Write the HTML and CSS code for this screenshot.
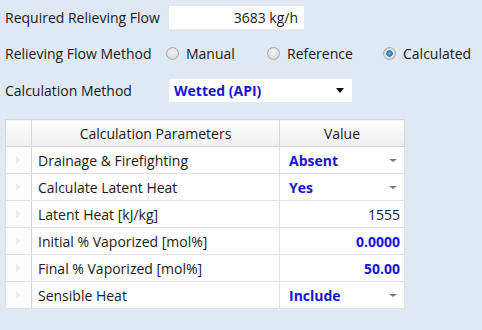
FILE: index.html
```html
<!DOCTYPE html>
<html lang="en">
<head>
    <meta charset="UTF-8">
    <meta name="viewport" content="width=device-width, initial-scale=1.0">
    <title>Relief Load</title>
    <link rel="stylesheet" href="styles.css">
</head>
<body>
    <div class="panel">
        <div class="row row-flow">
            <span class="label">Required Relieving Flow</span>
            <div class="textbox">3683 kg/h</div>
        </div>

        <div class="row row-method">
            <span class="label">Relieving Flow Method</span>
            <div class="radios">
                <span class="radio radio-manual"><span class="dot"></span>Manual</span>
                <span class="radio radio-ref"><span class="dot"></span>Reference</span>
                <span class="radio"><span class="dot checked"></span>Calculated</span>
            </div>
        </div>

        <div class="row row-calc">
            <span class="label">Calculation Method</span>
            <div class="combo">
                <span class="combo-text">Wetted (API)</span>
                <span class="combo-arrow"></span>
            </div>
        </div>

        <table class="grid">
            <colgroup>
                <col class="c-head">
                <col class="c-name">
                <col class="c-value">
            </colgroup>
            <thead>
                <tr>
                    <th></th>
                    <th>Calculation Parameters</th>
                    <th>Value</th>
                </tr>
            </thead>
            <tbody>
                <tr>
                    <td class="rh"><span class="tri"></span></td>
                    <td>Drainage &amp; Firefighting</td>
                    <td class="pick">Absent<span class="drop"></span></td>
                </tr>
                <tr>
                    <td class="rh"><span class="tri"></span></td>
                    <td>Calculate Latent Heat</td>
                    <td class="pick">Yes<span class="drop"></span></td>
                </tr>
                <tr>
                    <td class="rh"><span class="tri"></span></td>
                    <td>Latent Heat [kJ/kg]</td>
                    <td class="num">1555</td>
                </tr>
                <tr>
                    <td class="rh"><span class="tri"></span></td>
                    <td>Initial % Vaporized [mol%]</td>
                    <td class="num blue">0.0000</td>
                </tr>
                <tr>
                    <td class="rh"><span class="tri"></span></td>
                    <td>Final % Vaporized [mol%]</td>
                    <td class="num blue">50.00</td>
                </tr>
                <tr>
                    <td class="rh"><span class="tri"></span></td>
                    <td>Sensible Heat</td>
                    <td class="pick">Include<span class="drop"></span></td>
                </tr>
            </tbody>
        </table>
    </div>
</body>
</html>
```

FILE: styles.css
```css
body {
    margin: 0;
    background-color: #dfe8f5;
    font-family: "Open Sans", "Noto Sans", sans-serif;
    font-size: 14px;
    color: #1a1a1a;
}
.panel {
    padding: 5px 0 0 5px;
}
.row {
    display: flex;
    align-items: center;
    height: 25px;
}
.row-flow {
    margin-bottom: 11px;
}
.row-method {
    margin-bottom: 12px;
}
.row-calc {
    margin-bottom: 16px;
}
.label {
    width: 163px;
    flex: none;
}
.textbox {
    box-sizing: border-box;
    width: 137px;
    height: 25px;
    line-height: 23px;
    padding-right: 6px;
    text-align: right;
    background: white;
    border: 1px solid #e3e9f1;
}
.radios {
    display: flex;
    align-items: center;
    margin-left: -2px;
}
.radio {
    display: flex;
    align-items: center;
}
.radio-manual {
    width: 101px;
}
.radio-ref {
    width: 116px;
}
.dot {
    box-sizing: border-box;
    width: 13px;
    height: 13px;
    margin-right: 7px;
    border-radius: 50%;
    border: 1px solid #a8a8a8;
    background: radial-gradient(circle at 50% 40%, #f4f4f4 0%, #dcdcdc 70%, #cfcfcf 100%);
}
.dot.checked {
    background: radial-gradient(circle, #5fc3ee 0%, #1e7fc0 32%, #1e7fc0 38%, #e2e2e2 46%, #cfcfcf 100%);
}
.combo {
    box-sizing: border-box;
    width: 185px;
    height: 25px;
    display: flex;
    align-items: center;
    justify-content: space-between;
    padding: 0 8px 0 5px;
    background: white;
    border: 1px solid #e3e9f1;
}
.combo-text {
    color: #1515d6;
    font-weight: bold;
}
.combo-arrow {
    width: 0;
    height: 0;
    border-left: 4px solid transparent;
    border-right: 4px solid transparent;
    border-top: 5px solid #111;
}
.grid {
    border-collapse: collapse;
    width: 399px;
    table-layout: fixed;
    background: white;
    border: 1px solid #d4d4d4;
}
.c-head {
    width: 26px;
}
.c-name {
    width: 248px;
}
.c-value {
    width: 125px;
}
.grid th,
.grid td {
    height: 26px;
    padding: 0;
    border: 1px solid #e2e2e2;
    white-space: nowrap;
}
.grid th {
    font-weight: normal;
    background: linear-gradient(#fdfdfd, #f0f0f0);
    border-color: #d6d6d6;
}
.grid td {
    padding-left: 6px;
}
.grid td.rh {
    padding: 0 0 0 10px;
    background: #fdfdfd;
    border-right-color: #d6d6d6;
}
.tri {
    display: block;
    width: 0;
    height: 0;
    border-top: 4px solid transparent;
    border-bottom: 4px solid transparent;
    border-left: 5px solid #ececec;
}
.grid td.pick {
    padding: 0 7px 0 9px;
    color: #1515d6;
    font-weight: bold;
}
.drop {
    float: right;
    margin-top: 8px;
    width: 0;
    height: 0;
    border-left: 4px solid transparent;
    border-right: 4px solid transparent;
    border-top: 3px solid #7a7a7a;
}
.grid td.num {
    text-align: right;
    padding-right: 4px;
}
.grid td.blue {
    color: #1515d6;
    font-weight: bold;
}
```
